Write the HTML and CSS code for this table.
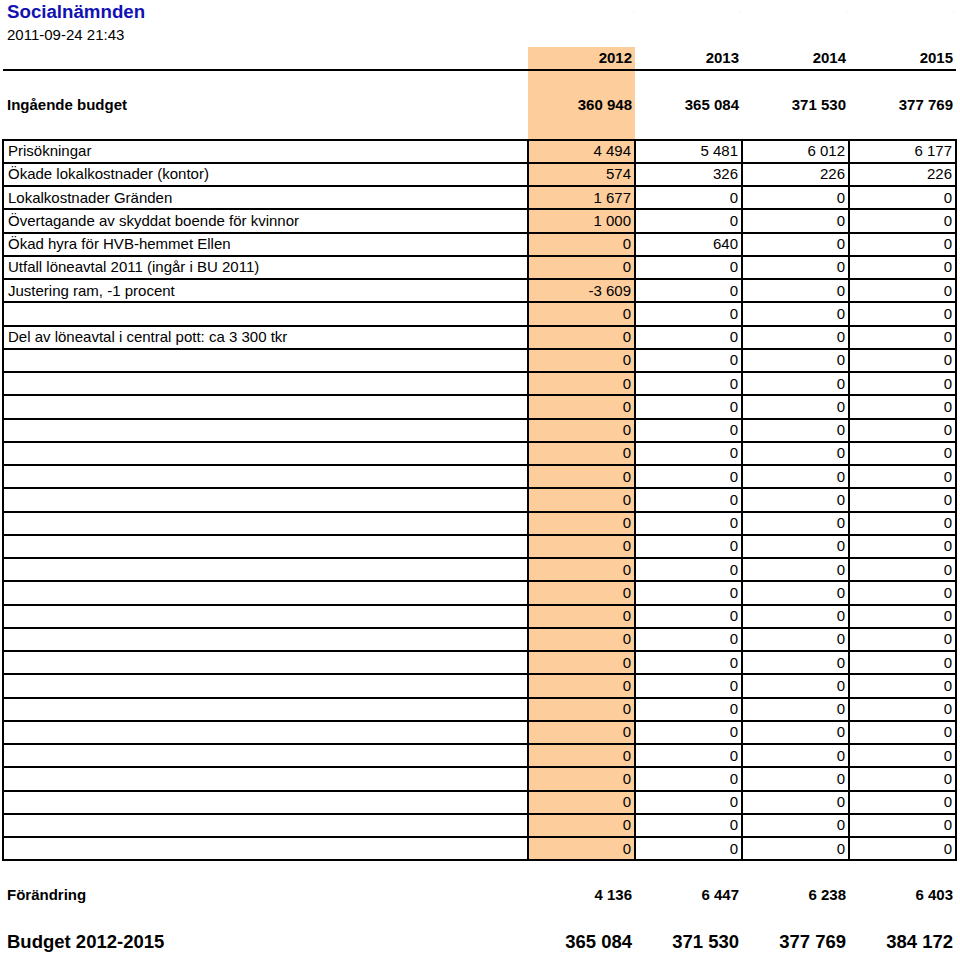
FILE: index.html
```html
<!DOCTYPE html>
<html lang="sv">
<head>
<meta charset="utf-8">
<title>Socialnämnden</title>
<link rel="stylesheet" href="styles.css">
</head>
<body>
<table class="sheet">
  <colgroup>
    <col class="c-label"><col class="c-y"><col class="c-y"><col class="c-y"><col class="c-y">
  </colgroup>
  <tbody>
    <tr class="r"><td class="title">Socialnämnden</td><td class="dot">.</td><td class="dot">.</td><td class="dot">.</td><td class="dot">.</td></tr>
    <tr class="r"><td class="date">2011-09-24 21:43</td><td></td><td></td><td></td><td></td></tr>
    <tr class="r head"><td></td><td class="hi">2012</td><td>2013</td><td>2014</td><td>2015</td></tr>
    <tr class="r"><td></td><td class="hi"></td><td></td><td></td><td></td></tr>
    <tr class="r bold"><td class="lbl">Ingående budget</td><td class="hi">360 948</td><td>365 084</td><td>371 530</td><td>377 769</td></tr>
    <tr class="r"><td></td><td class="hi"></td><td></td><td></td><td></td></tr>
  </tbody>
  <tbody class="grid">
    <tr class="r"><td>Prisökningar</td><td class="hi">4 494</td><td>5 481</td><td>6 012</td><td>6 177</td></tr>
    <tr class="r"><td>Ökade lokalkostnader (kontor)</td><td class="hi">574</td><td>326</td><td>226</td><td>226</td></tr>
    <tr class="r"><td>Lokalkostnader Gränden</td><td class="hi">1 677</td><td>0</td><td>0</td><td>0</td></tr>
    <tr class="r"><td>Övertagande av skyddat boende för kvinnor</td><td class="hi">1 000</td><td>0</td><td>0</td><td>0</td></tr>
    <tr class="r"><td>Ökad hyra för HVB-hemmet Ellen</td><td class="hi">0</td><td>640</td><td>0</td><td>0</td></tr>
    <tr class="r"><td>Utfall löneavtal 2011 (ingår i BU 2011)</td><td class="hi">0</td><td>0</td><td>0</td><td>0</td></tr>
    <tr class="r"><td>Justering ram, -1 procent</td><td class="hi">-3 609</td><td>0</td><td>0</td><td>0</td></tr>
    <tr class="r"><td></td><td class="hi">0</td><td>0</td><td>0</td><td>0</td></tr>
    <tr class="r"><td>Del av löneavtal i central pott: ca 3 300 tkr</td><td class="hi">0</td><td>0</td><td>0</td><td>0</td></tr>
    <tr class="r"><td></td><td class="hi">0</td><td>0</td><td>0</td><td>0</td></tr>
    <tr class="r"><td></td><td class="hi">0</td><td>0</td><td>0</td><td>0</td></tr>
    <tr class="r"><td></td><td class="hi">0</td><td>0</td><td>0</td><td>0</td></tr>
    <tr class="r"><td></td><td class="hi">0</td><td>0</td><td>0</td><td>0</td></tr>
    <tr class="r"><td></td><td class="hi">0</td><td>0</td><td>0</td><td>0</td></tr>
    <tr class="r"><td></td><td class="hi">0</td><td>0</td><td>0</td><td>0</td></tr>
    <tr class="r"><td></td><td class="hi">0</td><td>0</td><td>0</td><td>0</td></tr>
    <tr class="r"><td></td><td class="hi">0</td><td>0</td><td>0</td><td>0</td></tr>
    <tr class="r"><td></td><td class="hi">0</td><td>0</td><td>0</td><td>0</td></tr>
    <tr class="r"><td></td><td class="hi">0</td><td>0</td><td>0</td><td>0</td></tr>
    <tr class="r"><td></td><td class="hi">0</td><td>0</td><td>0</td><td>0</td></tr>
    <tr class="r"><td></td><td class="hi">0</td><td>0</td><td>0</td><td>0</td></tr>
    <tr class="r"><td></td><td class="hi">0</td><td>0</td><td>0</td><td>0</td></tr>
    <tr class="r"><td></td><td class="hi">0</td><td>0</td><td>0</td><td>0</td></tr>
    <tr class="r"><td></td><td class="hi">0</td><td>0</td><td>0</td><td>0</td></tr>
    <tr class="r"><td></td><td class="hi">0</td><td>0</td><td>0</td><td>0</td></tr>
    <tr class="r"><td></td><td class="hi">0</td><td>0</td><td>0</td><td>0</td></tr>
    <tr class="r"><td></td><td class="hi">0</td><td>0</td><td>0</td><td>0</td></tr>
    <tr class="r"><td></td><td class="hi">0</td><td>0</td><td>0</td><td>0</td></tr>
    <tr class="r"><td></td><td class="hi">0</td><td>0</td><td>0</td><td>0</td></tr>
    <tr class="r"><td></td><td class="hi">0</td><td>0</td><td>0</td><td>0</td></tr>
    <tr class="r"><td></td><td class="hi">0</td><td>0</td><td>0</td><td>0</td></tr>
  </tbody>
  <tbody>
    <tr class="r"><td></td><td></td><td></td><td></td><td></td></tr>
    <tr class="r bold"><td class="lbl">Förändring</td><td>4 136</td><td>6 447</td><td>6 238</td><td>6 403</td></tr>
    <tr class="r"><td></td><td></td><td></td><td></td><td></td></tr>
    <tr class="r total"><td class="lbl">Budget 2012-2015</td><td>365 084</td><td>371 530</td><td>377 769</td><td>384 172</td></tr>
  </tbody>
</table>
</body>
</html>
```

FILE: styles.css
```css
html, body {
  margin: 0;
  padding: 0;
  background: #ffffff;
}

body {
  font-family: "Liberation Sans", Arial, Helvetica, sans-serif;
  font-size: 15px;
  color: #000000;
}

.sheet {
  border-collapse: collapse;
  table-layout: fixed;
  width: 953px;
  margin-left: 2px;
}

.c-label { width: 525px; }
.c-y { width: 107px; }

.sheet td {
  padding: 0 3px 1px 3px;
  height: 23.26px;
  line-height: 17px;
  white-space: nowrap;
  overflow: hidden;
  text-align: right;
  vertical-align: middle;
  box-sizing: border-box;
}

.sheet td:first-child {
  text-align: left;
  padding-left: 4px;
}

.sheet tr.r {
  height: 23.26px;
}

.title {
  font-size: 18.7px;
  font-weight: bold;
  color: #1212b2;
}

.sheet td.dot {
  color: #c8c8c8;
  font-size: 6px;
  line-height: 6px;
  padding-right: 1px;
}

.head td {
  font-weight: bold;
  border-bottom: 2px solid #000000;
}

.bold td {
  font-weight: bold;
}

.hi {
  background: #fdcd9c;
}

.grid td {
  border: 2px solid #000000;
}

.total td {
  font-weight: bold;
  font-size: 18.5px;
}
```
